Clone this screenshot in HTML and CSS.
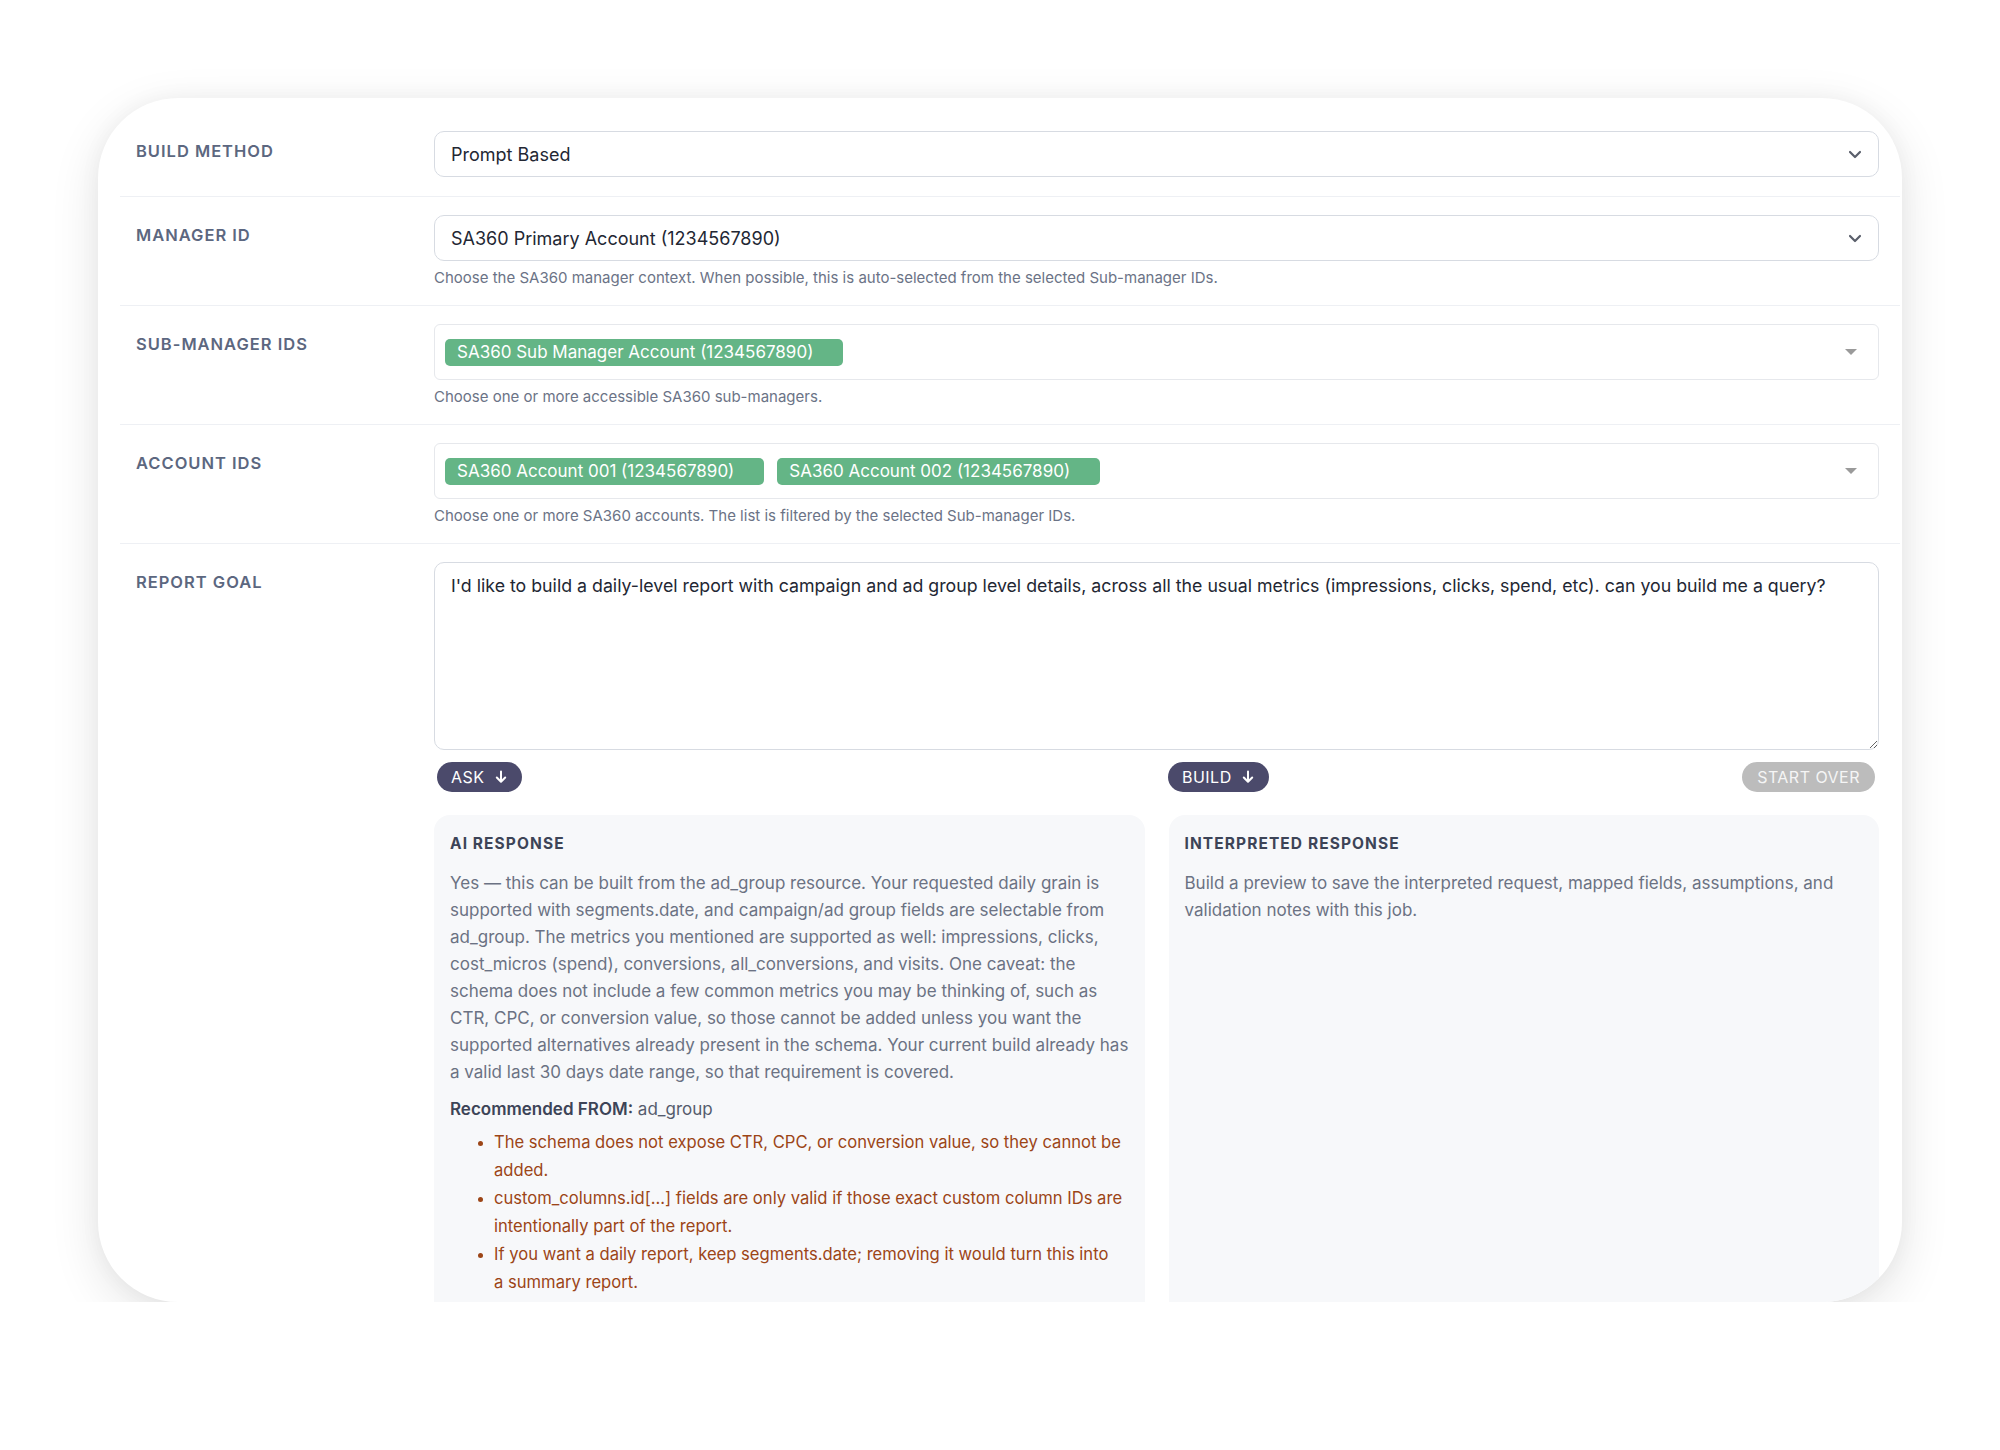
FILE: index.html
```html
<!DOCTYPE html>
<html lang="en">
<head>
    <meta charset="UTF-8">
    <meta name="viewport" content="width=device-width, initial-scale=1.0">
    <title>Report Builder</title>
    <link rel="stylesheet" href="styles.css">
</head>
<body>
    <div class="frame">
        <div class="form">

            <div class="row">
                <div class="label">Build Method</div>
                <div class="field">
                    <div class="select">
                        <span>Prompt Based</span>
                        <svg class="chevron" width="14" height="9" viewBox="0 0 14 9"><path d="M2 2l5 5 5-5" fill="none" stroke="#5a5f6b" stroke-width="2.2" stroke-linecap="round" stroke-linejoin="round"/></svg>
                    </div>
                </div>
            </div>

            <div class="row">
                <div class="label">Manager ID</div>
                <div class="field">
                    <div class="select">
                        <span>SA360 Primary Account (1234567890)</span>
                        <svg class="chevron" width="14" height="9" viewBox="0 0 14 9"><path d="M2 2l5 5 5-5" fill="none" stroke="#5a5f6b" stroke-width="2.2" stroke-linecap="round" stroke-linejoin="round"/></svg>
                    </div>
                    <p class="help">Choose the SA360 manager context. When possible, this is auto-selected from the selected Sub-manager IDs.</p>
                </div>
            </div>

            <div class="row">
                <div class="label">Sub-Manager IDs</div>
                <div class="field">
                    <div class="multi">
                        <span class="tag">SA360 Sub Manager Account (1234567890)</span>
                        <svg class="caret" width="14" height="8" viewBox="0 0 14 8"><path d="M1 1h12L7 7z" fill="#9a9a9a"/></svg>
                    </div>
                    <p class="help">Choose one or more accessible SA360 sub-managers.</p>
                </div>
            </div>

            <div class="row">
                <div class="label">Account IDs</div>
                <div class="field">
                    <div class="multi">
                        <span class="tag">SA360 Account 001 (1234567890)</span>
                        <span class="tag">SA360 Account 002 (1234567890)</span>
                        <svg class="caret" width="14" height="8" viewBox="0 0 14 8"><path d="M1 1h12L7 7z" fill="#9a9a9a"/></svg>
                    </div>
                    <p class="help">Choose one or more SA360 accounts. The list is filtered by the selected Sub-manager IDs.</p>
                </div>
            </div>

            <div class="row row-last">
                <div class="label">Report Goal</div>
                <div class="field">
                    <textarea class="goal" spellcheck="false">I'd like to build a daily-level report with campaign and ad group level details, across all the usual metrics (impressions, clicks, spend, etc). can you build me a query?</textarea>

                    <div class="actions">
                        <div class="actions-col">
                            <button class="btn">Ask
                                <svg width="12" height="14" viewBox="0 0 12 14"><path d="M6 1.5v10M1.8 7.5L6 11.8l4.2-4.3" fill="none" stroke="#fff" stroke-width="2" stroke-linecap="round" stroke-linejoin="round"/></svg>
                            </button>
                        </div>
                        <div class="actions-col">
                            <button class="btn">Build
                                <svg width="12" height="14" viewBox="0 0 12 14"><path d="M6 1.5v10M1.8 7.5L6 11.8l4.2-4.3" fill="none" stroke="#fff" stroke-width="2" stroke-linecap="round" stroke-linejoin="round"/></svg>
                            </button>
                            <button class="btn btn-muted">Start Over</button>
                        </div>
                    </div>

                    <div class="panels">
                        <div class="panel">
                            <h3>AI Response</h3>
                            <p>Yes — this can be built from the ad_group resource. Your requested daily grain is supported with segments.date, and campaign/ad group fields are selectable from ad_group. The metrics you mentioned are supported as well: impressions, clicks, cost_micros (spend), conversions, all_conversions, and visits. One caveat: the schema does not include a few common metrics you may be thinking of, such as CTR, CPC, or conversion value, so those cannot be added unless you want the supported alternatives already present in the schema. Your current build already has a valid last 30 days date range, so that requirement is covered.</p>
                            <p class="from"><strong>Recommended FROM:</strong> ad_group</p>
                            <ul class="notes">
                                <li>The schema does not expose CTR, CPC, or conversion value, so they cannot be added.</li>
                                <li>custom_columns.id[...] fields are only valid if those exact custom column IDs are intentionally part of the report.</li>
                                <li>If you want a daily report, keep segments.date; removing it would turn this into a&nbsp;summary report.</li>
                            </ul>
                        </div>
                        <div class="panel">
                            <h3>Interpreted Response</h3>
                            <p>Build a preview to save the interpreted request, mapped fields, assumptions, and validation notes with this job.</p>
                        </div>
                    </div>
                </div>
            </div>

        </div>
    </div>
</body>
</html>
```

FILE: styles.css
```css
body {
    margin: 0;
    background: #fff;
    font-family: 'Inter', 'Noto Sans', sans-serif;
    color: #232733;
}

.frame {
    margin: 98px 0 0 98px;
    width: 1804px;
    height: 1204px;
    background: #fff;
    border-radius: 80px;
    overflow: hidden;
    box-shadow: 0 14px 50px rgba(0, 0, 0, 0.11), 0 0 22px rgba(0, 0, 0, 0.04);
}

.form {
    padding: 15px 2px 0 22px;
}

.row {
    display: grid;
    grid-template-columns: 314px 1fr;
    padding: 18px 21px 19px 0;
    border-bottom: 1px solid #eef0f4;
}
.row-last {
    border-bottom: none;
}

.label {
    padding: 9px 0 0 16px;
    font-size: 16.5px;
    line-height: 22px;
    font-weight: 600;
    letter-spacing: 0.06em;
    text-transform: uppercase;
    color: #5c6780;
}

.select {
    height: 46px;
    box-sizing: border-box;
    border: 1.5px solid #d7dbe2;
    border-radius: 10px;
    padding: 0 16px;
    display: flex;
    align-items: center;
    justify-content: space-between;
    font-size: 18px;
    color: #232733;
}

.multi {
    height: 56px;
    box-sizing: border-box;
    border: 1.5px solid #e6e8ec;
    border-radius: 6px;
    padding: 0 20px 0 10px;
    display: flex;
    align-items: center;
    gap: 13px;
}
.tag {
    height: 27px;
    display: inline-flex;
    align-items: center;
    padding: 0 30px 0 12px;
    background: #64b586;
    border-radius: 5px;
    color: #fff;
    font-size: 17px;
}
.caret {
    margin-left: auto;
}

.help {
    margin: 7px 0 -2px;
    font-size: 15px;
    line-height: 20px;
    color: #6b7386;
}

.goal {
    display: block;
    width: 100%;
    height: 188px;
    box-sizing: border-box;
    border: 1.5px solid #d7dbe2;
    border-radius: 10px;
    padding: 12px 16px;
    font-family: inherit;
    font-size: 17.75px;
    line-height: 22px;
    color: #232733;
    resize: vertical;
    outline: none;
}

.actions {
    display: grid;
    grid-template-columns: 1fr 1fr;
    gap: 24px;
    margin-top: 12px;
    padding: 0 4px 0 3px;
}
.actions-col {
    display: flex;
    justify-content: space-between;
    align-items: center;
}
.btn {
    height: 30px;
    display: inline-flex;
    align-items: center;
    gap: 10px;
    padding: 0 15px 0 14px;
    border: none;
    border-radius: 15px;
    background: #4b4a6b;
    color: #fff;
    font-family: inherit;
    font-size: 16px;
    letter-spacing: 0.03em;
    text-transform: uppercase;
    cursor: pointer;
}
.btn-muted {
    padding: 0 15px;
    background: #bcbcbc;
    color: #f5f5f5;
}

.panels {
    display: grid;
    grid-template-columns: 1fr 1fr;
    gap: 24px;
    margin-top: 23px;
}
.panel {
    background: #f7f8fa;
    border-radius: 16px;
    padding: 20px 16px 24px;
    min-height: 560px;
}
.panel h3 {
    margin: 0 0 17px;
    font-size: 15.5px;
    line-height: 18px;
    font-weight: 700;
    letter-spacing: 0.07em;
    text-transform: uppercase;
    color: #3d4457;
}
.panel p {
    margin: 0;
    font-size: 17px;
    line-height: 27px;
    color: #6b7283;
}
.panel .from {
    margin-top: 10px;
    color: #555c6d;
}
.from strong {
    color: #3d4457;
    font-weight: 600;
}
.notes {
    margin: 5px 0 0;
    padding-left: 44px;
    font-size: 16.6px;
    line-height: 28px;
    color: #9c4517;
}
.notes li::marker {
    font-size: 14px;
}
```
